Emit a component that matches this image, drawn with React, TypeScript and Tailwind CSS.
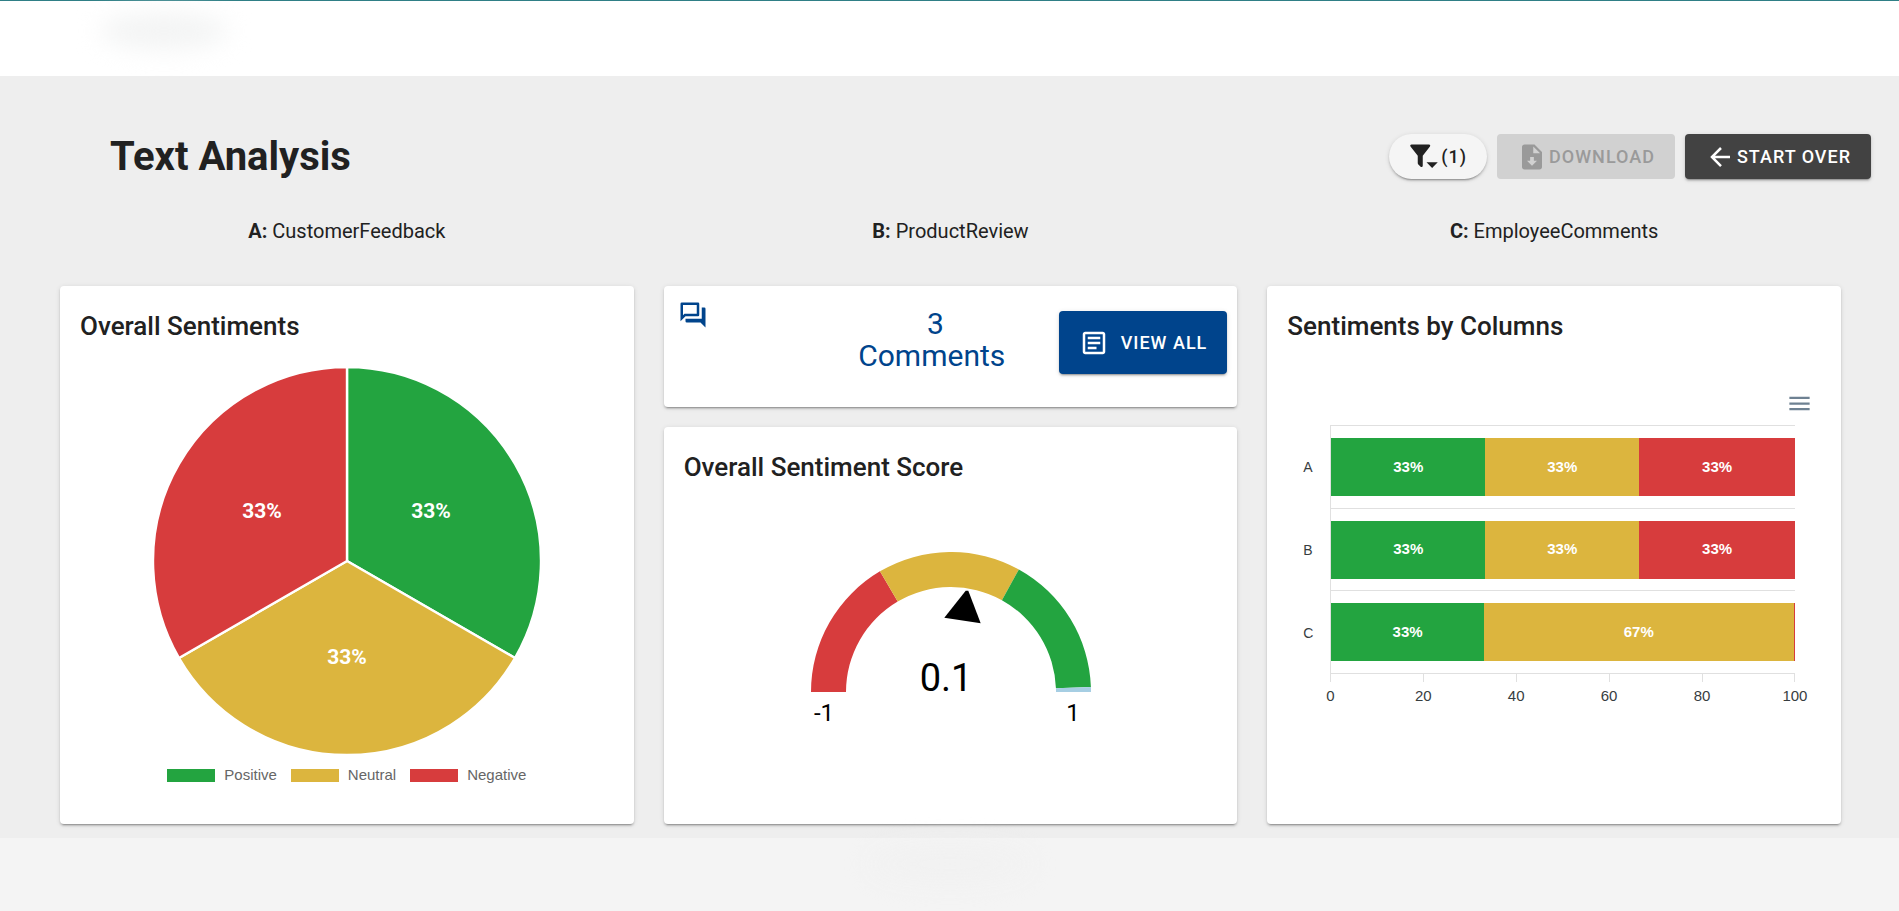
import React from "react";

const GREEN = "#23a440";
const YELLOW = "#dcb53e";
const RED = "#d73c3d";

const RAISED =
  "shadow-[0_3px_1px_-2px_rgba(0,0,0,0.2),0_2px_2px_0_rgba(0,0,0,0.14),0_1px_5px_0_rgba(0,0,0,0.12)]";
const CARD = `rounded bg-white ${RAISED}`;
const CARD_TITLE = "text-[26px] leading-10 font-medium";

const COLUMNS = [
  { key: "A", name: "CustomerFeedback" },
  { key: "B", name: "ProductReview" },
  { key: "C", name: "EmployeeComments" },
];

function Icon({ d, className }: { d: string; className: string }) {
  return (
    <svg viewBox="0 0 24 24" fill="currentColor" className={className} aria-hidden="true">
      <path d={d} />
    </svg>
  );
}

const ICONS = {
  filterMenu:
    "M11 11L16.76 3.62A1 1 0 0 0 16.59 2.22A1 1 0 0 0 16 2H2A1 1 0 0 0 1.38 2.22A1 1 0 0 0 1.21 3.62L7 11V16.87A1 1 0 0 0 7.29 17.7L9.29 19.7A1 1 0 0 0 10.7 19.7A1 1 0 0 0 11 18.87V11M14 16.2L18.5 20.7L23 16.2Z",
  fileDownload:
    "M14,2H6C4.89,2 4,2.89 4,4V20C4,21.11 4.89,22 6,22H18C19.11,22 20,21.11 20,20V8L14,2M12,19L8,15H10.5V12H13.5V15H16L12,19M13,9V3.5L18.5,9H13Z",
  arrowLeft: "M20,11V13H8L13.5,18.5L12.08,19.92L4.16,12L12.08,4.08L13.5,5.5L8,11H20Z",
  forum:
    "M15,4V11H5.17L4,12.17V4H15M16,2H3A1,1 0 0,0 2,3V17L6,13H16A1,1 0 0,0 17,12V3A1,1 0 0,0 16,2M21,6H19V15H6V17A1,1 0 0,0 7,18H18L22,22V7A1,1 0 0,0 21,6Z",
  textBox:
    "M5,3C3.89,3 3,3.89 3,5V19C3,20.11 3.89,21 5,21H19C20.11,21 21,20.11 21,19V5C21,3.89 20.11,3 19,3H5M5,5H19V19H5V5M7,7V9H17V7H7M7,11V13H17V11H7M7,15V17H14V15H7Z",
  menu: "M3 18h18v-2H3v2zm0-5h18v-2H3v2zm0-7v2h18V6H3z",
};

function PieChart() {
  const slices = [
    { d: "M194 194V0A194 194 0 0 1 362 291Z", fill: GREEN },
    { d: "M194 194L362 291A194 194 0 0 1 26 291Z", fill: YELLOW },
    { d: "M194 194L26 291A194 194 0 0 1 194 0Z", fill: RED },
  ];
  const labels = [
    [278, 151],
    [194, 297],
    [109, 151],
  ];
  return (
    <svg viewBox="0 0 388 388" className="h-[388px] w-[388px]" role="img" aria-label="Overall sentiments">
      {slices.map((s) => (
        <path key={s.fill} d={s.d} fill={s.fill} stroke="#fff" strokeWidth="2.4" strokeLinejoin="round" />
      ))}
      {labels.map(([x, y]) => (
        <text key={x} x={x} y={y} textAnchor="middle" fill="#fff" fontSize="21" fontWeight="700">
          33%
        </text>
      ))}
    </svg>
  );
}

function LegendItem({ swatch, label }: { swatch: string; label: string }) {
  return (
    <li className="flex items-center gap-[9px]">
      <span className={`h-[13px] w-12 ${swatch}`} />
      {label}
    </li>
  );
}

function polar(r: number, deg: number) {
  const a = (deg * Math.PI) / 180;
  return `${(140 + r * Math.cos(a)).toFixed(2)} ${(140 - r * Math.sin(a)).toFixed(2)}`;
}

function arc(from: number, to: number) {
  return `M${polar(140, from)}A140 140 0 0 1 ${polar(140, to)}L${polar(105, to)}A105 105 0 0 0 ${polar(105, from)}Z`;
}

function Gauge() {
  return (
    <svg viewBox="-2 0 282 180" className="h-[180px] w-[282px]" role="img" aria-label="Overall sentiment score">
      <path d={arc(180, 120.5)} fill={RED} />
      <path d={arc(120.5, 61)} fill={YELLOW} />
      <path d={arc(61, 2)} fill={GREEN} />
      <path d={arc(2, 0)} fill="#a6cee3" />
      <path d="M154.7 38.7H157.3L169.7 71.3L133.3 65.7Z" fill="#000" />
      <text x="135" y="139" textAnchor="middle" fontSize="38" fill="#000">0.1</text>
      <text x="13" y="169" textAnchor="middle" fontSize="24" fill="#000">-1</text>
      <text x="262" y="169" textAnchor="middle" fontSize="24" fill="#000">1</text>
    </svg>
  );
}

const BARS = [
  {
    key: "A",
    parts: [
      { size: 33.2, label: "33%" },
      { size: 33.2, label: "33%" },
      { size: 33.6, label: "33%" },
    ],
  },
  {
    key: "B",
    parts: [
      { size: 33.2, label: "33%" },
      { size: 33.2, label: "33%" },
      { size: 33.6, label: "33%" },
    ],
  },
  {
    key: "C",
    parts: [
      { size: 32.9, label: "33%" },
      { size: 66.8, label: "67%" },
      { size: 0.3, label: "" },
    ],
  },
];
const FILLS = ["bg-[#23a440]", "bg-[#dcb53e]", "bg-[#d73c3d]"];
const TICKS = [0, 20, 40, 60, 80, 100];

function BarChart() {
  return (
    <div className="font-['Liberation_Sans',Arial,sans-serif] text-[15px] text-[#373d3f]">
      <div className="flex h-[249px]">
        <div className="flex w-[43px] flex-col text-sm">
          {BARS.map((b) => (
            <span key={b.key} className="flex flex-1 items-center pl-4">
              {b.key}
            </span>
          ))}
        </div>
        <div className="flex flex-1 flex-col border-t border-l border-[#e0e0e0]">
          {BARS.map((b) => (
            <div key={b.key} className="flex flex-1 items-center border-b border-[#e0e0e0]">
              <div className="flex h-[58px] w-full font-bold text-white">
                {b.parts.map((p, i) => (
                  <div
                    key={i}
                    className={`flex items-center justify-center ${FILLS[i]}`}
                    style={{ width: `${p.size}%` }}
                  >
                    {p.label}
                  </div>
                ))}
              </div>
            </div>
          ))}
        </div>
      </div>
      <div className="-mr-5 ml-[23px] flex justify-between">
        {TICKS.map((t) => (
          <span key={t} className="flex w-10 flex-col items-center leading-5">
            <span className="mb-1 h-2 w-px bg-[#e0e0e0]" />
            {t}
          </span>
        ))}
      </div>
    </div>
  );
}

export default function App() {
  return (
    <div className="flex min-h-screen flex-col bg-[#f4f4f4] font-[Roboto,sans-serif] text-[#212121]">
      <header className="h-[76px] border-t border-[#2f7f86] bg-white pt-3 pl-[100px]">
        <div className="h-9 w-32 rounded-[50%] bg-[#f3f4f4] blur-md" />
      </header>

      <main className="bg-[#eeeeee] pb-[14px]">
        <div className="flex items-center justify-between pt-[57px] pr-7 pl-[110px]">
          <h1 className="text-[40px] leading-[47px] font-bold">Text Analysis</h1>
          <div className="flex gap-[10px] text-lg font-medium tracking-[1px]">
            <button
              type="button"
              aria-label="Filters (1)"
              className={`flex h-[45px] items-center gap-[2px] rounded-full bg-[#f5f5f5] px-5 ${RAISED}`}
            >
              <Icon d={ICONS.filterMenu} className="h-[30px] w-[30px]" />
              (1)
            </button>
            <button
              type="button"
              disabled
              className="flex h-[45px] items-center gap-[2px] rounded bg-[#d1d1d1] px-5 text-[#9a9a9a]"
            >
              <Icon d={ICONS.fileDownload} className="h-[30px] w-[30px]" />
              DOWNLOAD
            </button>
            <button
              type="button"
              className={`flex h-[45px] items-center gap-[2px] rounded bg-[#424242] px-5 text-white ${RAISED}`}
            >
              <Icon d={ICONS.arrowLeft} className="h-[30px] w-[30px]" />
              START OVER
            </button>
          </div>
        </div>

        <div className="grid grid-cols-3 gap-[30px] pt-9 pr-[58px] pb-10 pl-[60px] text-center text-xl leading-[30px]">
          {COLUMNS.map((c) => (
            <p key={c.key}>
              <strong className="font-bold">{c.key}:</strong> {c.name}
            </p>
          ))}
        </div>

        <div className="grid grid-cols-3 gap-[30px] pr-[58px] pl-[60px]">
          <section className={`px-5 pt-5 pb-10 ${CARD}`}>
            <h2 className={CARD_TITLE}>Overall Sentiments</h2>
            <div className="mt-[21px] flex flex-col items-center">
              <PieChart />
              <ul className="mt-[11px] flex gap-[14px] font-['Liberation_Sans',Arial,sans-serif] text-[15px] leading-[18px] text-[#666]">
                <LegendItem swatch="bg-[#23a440]" label="Positive" />
                <LegendItem swatch="bg-[#dcb53e]" label="Neutral" />
                <LegendItem swatch="bg-[#d73c3d]" label="Negative" />
              </ul>
            </div>
          </section>

          <div className="flex flex-col gap-5">
            <section className={`flex h-[121px] justify-between pt-[14px] pr-[10px] pl-[14px] text-[#00448c] ${CARD}`}>
              <Icon d={ICONS.forum} className="h-[30px] w-[30px]" />
              <div className="flex gap-[53px]">
                <p className="w-[148px] pt-2 text-center text-[30px] leading-8">{"\u00a03 Comments"}</p>
                <button
                  type="button"
                  className={`mt-[11px] flex h-[63px] items-center gap-3 rounded bg-[#00448c] px-5 text-lg font-medium tracking-[1px] text-white ${RAISED}`}
                >
                  <Icon d={ICONS.textBox} className="h-[30px] w-[30px]" />
                  VIEW ALL
                </button>
              </div>
            </section>
            <section className={`flex-1 px-5 pt-5 ${CARD}`}>
              <h2 className={CARD_TITLE}>Overall Sentiment Score</h2>
              <div className="mt-[65px] flex justify-center">
                <Gauge />
              </div>
            </section>
          </div>

          <section className={`px-5 pt-5 ${CARD}`}>
            <h2 className={CARD_TITLE}>Sentiments by Columns</h2>
            <div className="mt-11 flex justify-end pr-2">
              <button type="button" aria-label="Chart menu" className="text-[#6e8192]">
                <Icon d={ICONS.menu} className="h-[27px] w-[27px]" />
              </button>
            </div>
            <div className="mt-2 pr-[26px]">
              <BarChart />
            </div>
          </section>
        </div>
      </main>

      <footer className="flex justify-center pt-2">
        <div className="h-9 w-40 rounded-[50%] bg-[#f1f1f1] blur-md" />
      </footer>
    </div>
  );
}
